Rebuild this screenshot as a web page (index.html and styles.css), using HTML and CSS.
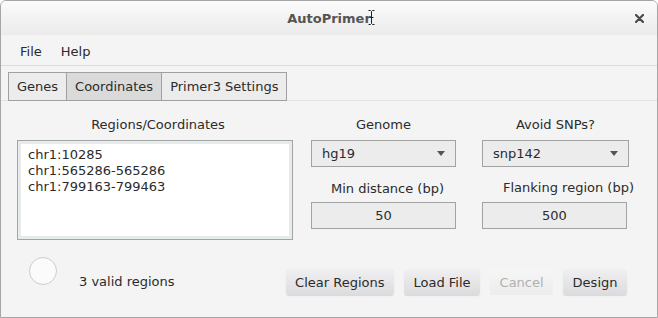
FILE: index.html
```html
<!DOCTYPE html>
<html lang="en">
<head>
    <meta charset="UTF-8">
    <title>AutoPrimer</title>
    <link rel="stylesheet" href="styles.css">
</head>
<body>
<div class="window">
    <div class="titlebar">
        <span class="title">AutoPrimer</span>
        <svg class="ibeam" width="7" height="15" viewBox="0 0 7 15">
            <path d="M0.5 0.5h2l1 1 1-1h2M3.5 1.5v12M0.5 14.5h2l1-1 1 1h2M1.5 7.5h4" fill="none" stroke="#222" stroke-width="1"/>
        </svg>
        <svg class="close" width="9" height="9" viewBox="0 0 9 9">
            <path d="M1 1L8 8M8 1L1 8" stroke="#4a4a4a" stroke-width="2.2" stroke-linecap="round"/>
        </svg>
    </div>
    <div class="menubar">
        <span class="menu">File</span>
        <span class="menu">Help</span>
    </div>
    <div class="tabs">
        <div class="tab">Genes</div>
        <div class="tab tab-on">Coordinates</div>
        <div class="tab">Primer3 Settings</div>
    </div>
    <div class="pane">
        <div class="top-row">
            <div class="regions">
                <div class="label label-regions">Regions/Coordinates</div>
                <textarea class="region-box">chr1:10285
chr1:565286-565286
chr1:799163-799463</textarea>
            </div>
            <div class="options">
                <div class="opt">
                    <div class="label">Genome</div>
                    <div class="combo"><span>hg19</span><i class="arrow"></i></div>
                </div>
                <div class="opt">
                    <div class="label">Avoid SNPs?</div>
                    <div class="combo"><span>snp142</span><i class="arrow"></i></div>
                </div>
                <div class="opt">
                    <div class="label label-min">Min distance (bp)</div>
                    <div class="field">50</div>
                </div>
                <div class="opt">
                    <div class="label label-flank">Flanking region (bp)</div>
                    <div class="field">500</div>
                </div>
            </div>
        </div>
        <div class="bottom-row">
            <div class="spinner"></div>
            <div class="status">3 valid regions</div>
            <div class="buttons">
                <button class="btn">Clear Regions</button>
                <button class="btn">Load File</button>
                <button class="btn btn-off">Cancel</button>
                <button class="btn">Design</button>
            </div>
        </div>
    </div>
</div>
</body>
</html>
```

FILE: styles.css
```css
*{
    margin: 0;
    padding: 0;
    box-sizing: border-box;
}
body{
    background: #ffffff;
    font-family: "DejaVu Sans", "Liberation Sans", sans-serif;
    font-size: 13px;
    color: #2b2b2b;
}
.window{
    width: 658px;
    height: 318px;
    border: 1px solid #a6a6a6;
    border-radius: 6px 6px 0 0;
    background: #f4f4f4;
    overflow: hidden;
}
.titlebar{
    position: relative;
    height: 34px;
    background: linear-gradient(#fbfbfb, #ebebeb);
    display: flex;
    align-items: center;
    justify-content: center;
}
.title{
    font-weight: bold;
    color: #555555;
    margin-top: 1px;
}
.ibeam{
    position: absolute;
    left: 367px;
    top: 9px;
}
.close{
    position: absolute;
    left: 634px;
    top: 13px;
}
.menubar{
    height: 31px;
    border-bottom: 1px solid #dadada;
    display: flex;
    align-items: center;
    padding: 4px 0 0 19px;
}
.menu{
    margin-right: 19px;
    line-height: 16px;
}
.tabs{
    display: flex;
    padding: 6px 0 0 7px;
    height: 35px;
    border-bottom: 1px solid #e2e2e2;
}
.tab{
    height: 29px;
    line-height: 27px;
    padding: 0 8px;
    background: #ececec;
    border: 1px solid #a0a0a0;
    margin-right: -1px;
}
.tab-on{
    background: #dadada;
}
.pane{
    padding: 16px 0 0 16px;
}
.top-row{
    display: flex;
    align-items: flex-start;
}
.label{
    line-height: 16px;
    text-align: center;
    white-space: nowrap;
}
.regions{
    width: 276px;
}
.label-regions{
    padding-left: 6px;
}
.regions .label{
    margin-bottom: 7px;
}
.region-box{
    display: block;
    width: 276px;
    height: 100px;
    resize: none;
    border: 1px solid #a4a4a4;
    box-shadow: inset 0 0 0 3px #e6ecec;
    background: #ffffff;
    padding: 6px 10px;
    font-family: "DejaVu Sans", "Liberation Sans", sans-serif;
    font-size: 13px;
    line-height: 16px;
    color: #2b2b2b;
    outline: none;
}
.options{
    display: grid;
    grid-template-columns: 145px 147px;
    align-content: start;
    column-gap: 26px;
    row-gap: 14px;
    margin-left: 18px;
}
.opt .label{
    margin-bottom: 7px;
}
.opt .label-min,
.opt .label-flank{
    margin-bottom: 5px;
}
.label-min{
    padding-left: 8px;
}
.label-flank{
    padding-left: 6px;
    margin-right: -20px;
    margin-top: -1px;
    padding-bottom: 1px;
}
.combo{
    height: 27px;
    border: 1px solid #a2a2a2;
    background: #ececec;
    display: flex;
    align-items: center;
    justify-content: space-between;
    padding: 0 10px;
}
.arrow{
    width: 0;
    height: 0;
    border-left: 4px solid transparent;
    border-right: 4px solid transparent;
    border-top: 5px solid #555555;
}
.field{
    height: 27px;
    border: 1px solid #a2a2a2;
    background: #ececec;
    line-height: 25px;
    text-align: center;
}
.opt:nth-child(4) .field{
    width: 145px;
}
.bottom-row{
    display: flex;
    align-items: flex-start;
    margin-top: 17px;
}
.spinner{
    width: 28px;
    height: 28px;
    border-radius: 50%;
    border: 1px solid #cccccc;
    background: #fbfbfb;
    margin-left: 12px;
}
.status{
    margin: 17px 0 0 22px;
    line-height: 16px;
}
.buttons{
    display: flex;
    gap: 10px;
    margin: 12px 0 0 111px;
}
.btn{
    height: 26px;
    padding: 0 9.5px;
    border: none;
    border-radius: 3px;
    background: linear-gradient(#f0f0f2, #dcdcde);
    box-shadow: 0 1px 1px rgba(0, 0, 0, 0.12);
    font-family: "DejaVu Sans", "Liberation Sans", sans-serif;
    font-size: 13px;
    color: #2b2b2b;
}
.btn-off{
    background: linear-gradient(#f6f6f6, #ececec);
    color: #b0b0b0;
    box-shadow: none;
}
```
